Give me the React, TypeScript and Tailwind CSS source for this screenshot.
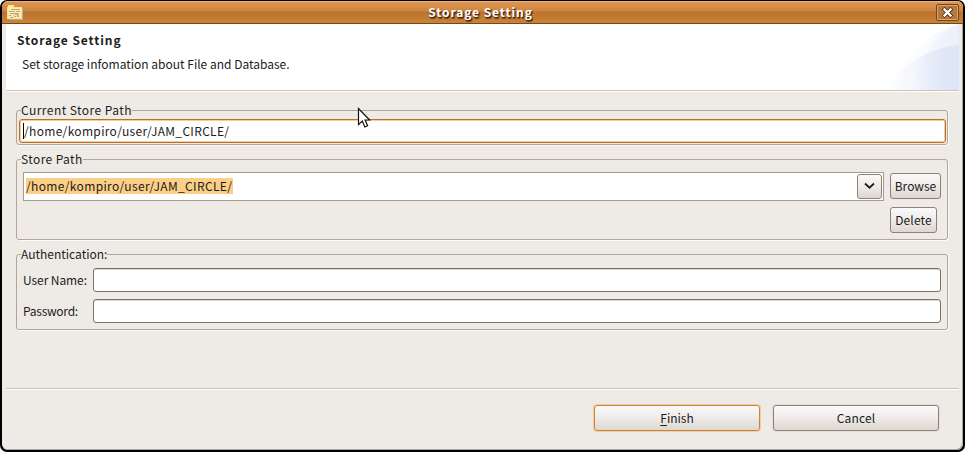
import type { ReactNode } from "react";

function FolderIcon() {
  return (
    <svg width="17" height="16" viewBox="0 0 17 16" shapeRendering="crispEdges">
      <path d="M2 3h14v12H2z" fill="#b9a99a" />
      <path d="M0 2h1V0h6v2h8v12H0z" fill="#fbdf9b" />
      <path d="M1 2h1V1h4v2h8v10H1z" fill="#fdeaae" />
      <path d="M4 4h9v1H4zM2 6h6v1H2zM9 6h4v1H9zM3 8h9v1H3zM2 10h2v1H2zM6 10h1v1H6zM8 9h3v1H8zM10 10h2v2h-2zM3 12h3v1H3zM7 11h2v1H7z" fill="#bda77b" />
    </svg>
  );
}

function TitleBar() {
  return (
    <div className="flex h-[22px] shrink-0 items-center border-t border-[#eeb47c] bg-[linear-gradient(#dc9650_0px,#cf843f_9px,#b9722e_10px,#c98337_20px)] pl-[5px] pr-[4px]">
      <FolderIcon />
      <div className="mb-[2px] flex-1 pl-[1px] text-center text-[12px] font-bold leading-[18px] tracking-[0.92px] text-white [text-shadow:1px_1px_1px_#3c2410,1px_2px_1px_#6b4015]">
        Storage Setting
      </div>
      <div className="flex h-[17px] w-[23px] items-center justify-center rounded-[2px] border border-[#76461b] bg-[#b8783b] shadow-[inset_0_0_0_1px_#dda36b]">
        <svg width="11" height="11" viewBox="0 0 11 11">
          <path d="M2.5 2.5l6 6M8.5 2.5l-6 6" stroke="#4b2b10" strokeWidth="3.9" strokeLinecap="square" />
          <path d="M2.5 2.5l6 6M8.5 2.5l-6 6" stroke="#fff" strokeWidth="2.4" strokeLinecap="square" />
        </svg>
      </div>
    </div>
  );
}

function BannerArt() {
  return (
    <svg width="75" height="66" viewBox="0 0 75 66" className="shrink-0">
      <defs>
        <linearGradient id="outer" gradientUnits="userSpaceOnUse" x1="4" x2="75" y1="0" y2="0">
          <stop offset="0" stopColor="#dfe7f7" stopOpacity="0" />
          <stop offset=".4" stopColor="#dfe7f7" stopOpacity=".2" />
          <stop offset="1" stopColor="#dfe7f7" />
        </linearGradient>
        <linearGradient id="inner" gradientUnits="userSpaceOnUse" x1="0" x2="75" y1="0" y2="0">
          <stop offset="0" stopColor="#dae3f6" stopOpacity="0" />
          <stop offset=".4" stopColor="#dae3f6" stopOpacity=".32" />
          <stop offset=".85" stopColor="#dae3f6" />
        </linearGradient>
      </defs>
      <path d="M4 66C16 38 39 10 75 0v66z" fill="url(#outer)" opacity=".4" />
      <path d="M28 66C34 38 49 12 75 0v66z" fill="url(#outer)" opacity=".4" />
      <path d="M1 66C18 40 43 24 75 21v45z" fill="url(#inner)" opacity=".8" />
    </svg>
  );
}

function Group({ title, legendClass, className, children }: { title: string; legendClass: string; className: string; children: ReactNode }) {
  return (
    <fieldset className={`rounded-[3px] border border-[#b3a698] shadow-[1px_1px_0_#fbf9f7] ${className}`}>
      <legend className={`ml-[4px] h-[19px] whitespace-nowrap leading-[18px] ${legendClass}`}>{title}</legend>
      {children}
    </fieldset>
  );
}

const button =
  "flex items-center justify-center rounded-[3px] border border-[#8d8175] bg-[linear-gradient(#fbfafa,#eeebe8_50%,#ded7d1)] whitespace-nowrap";
const entry =
  "h-[24px] flex-1 rounded-[3px] border border-[#7d7064] bg-white shadow-[inset_0_1px_0_#dcd7d2]";

export default function App() {
  return (
    <div className="relative h-[452px] w-[965px] overflow-hidden bg-white font-['Noto_Sans_CJK_JP','Noto_Sans',sans-serif] text-[12px] text-[#1c1c1c]">
      <div className="flex h-[452px] flex-col overflow-hidden rounded-[7px] bg-black pb-[2px] pl-[2px] pr-[2px] pt-px">
        <div className="flex flex-1 flex-col overflow-hidden rounded-[6px] bg-[#eeebe7] shadow-[inset_-1px_-1px_0_#afa49a]">
          <TitleBar />
          <div className="h-px shrink-0 bg-[#764718]" />
          <div className="ml-[4px] mr-[4px] flex h-[66px] shrink-0 justify-between bg-white">
            <div className="flex flex-col pl-[11px] pt-[7px]">
              <div className="h-[18px] whitespace-nowrap font-bold leading-[18px] tracking-[0.92px]">Storage Setting</div>
              <div className="mt-[6px] h-[18px] whitespace-nowrap pl-[5px] leading-[18px]">Set storage infomation about File and Database.</div>
            </div>
            <BannerArt />
          </div>
          <div className="ml-[4px] mr-[4px] h-[2px] shrink-0 border-b border-white bg-[#cdc0b5]" />

          <div className="flex flex-col pl-[14px] pr-[15px] pt-[9px]">
            <Group title="Current Store Path" legendClass="tracking-[0.45px]" className="h-[44px]">
              <div className="-mt-px ml-[2px] mr-px flex h-[24px] items-center rounded-[3px] border border-[#bf6f23] bg-white pl-[3px] shadow-[inset_0_0_0_1px_#f5cd94]">
                <span className="h-[16px] w-px bg-black" />
                <span className="whitespace-nowrap leading-[18px] tracking-[0.32px]">/home/kompiro/user/JAM_CIRCLE/</span>
              </div>
            </Group>

            <Group title="Store Path" legendClass="tracking-[0.4px]" className="mt-[5px] h-[90px]">
              <div className="flex items-start pl-[6px] pt-[3px]">
                <div className="flex h-[29px] w-[861px] items-center border border-[#a79b90] bg-white pl-[2px] pr-px">
                  <span className="mb-px h-[16px] whitespace-nowrap bg-[#fbcf86] pr-[1px] leading-[16px] tracking-[0.35px]">/home/kompiro/user/JAM_CIRCLE/</span>
                  <span className={`${button} ml-auto h-[25px] w-[25px]`}>
                    <svg width="11" height="8" viewBox="0 0 11 8" fill="none" className="mb-px mr-px">
                      <path d="M1 1.5l4.5 4.2L10 1.5" stroke="#1c1c1c" strokeWidth="1.8" />
                    </svg>
                  </span>
                </div>
                <div className="ml-[6px] mt-px flex flex-col gap-[8px]">
                  <button className={`${button} h-[26px] w-[51px]`}>Browse</button>
                  <button className={`${button} h-[26px] w-[47px] tracking-[0.15px]`}>Delete</button>
                </div>
              </div>
            </Group>

            <Group title="Authentication:" legendClass="" className="mt-[5px] h-[85px]">
              <div className="flex flex-col gap-[7px] pl-[6px] pr-[6px] pt-[4px]">
                <label className="flex items-center">
                  <span className="w-[70px] whitespace-nowrap leading-[18px] tracking-[-0.08px]">User Name:</span>
                  <span className={entry} />
                </label>
                <label className="flex items-center">
                  <span className="w-[70px] whitespace-nowrap leading-[18px] tracking-[-0.25px]">Password:</span>
                  <span className={entry} />
                </label>
              </div>
            </Group>
          </div>

          <div className="ml-[4px] mr-[4px] mt-[58px] h-[2px] shrink-0 border-b border-white bg-[#cdc0b5]" />
          <div className="flex justify-end gap-[13px] pr-[24px] pt-[15px]">
            <button className={`${button} h-[26px] w-[166px] !border-[#c58443] shadow-[0_0_0_1px_#f4cf9c]`}>
              <span className="underline underline-offset-2">F</span>inish
            </button>
            <button className={`${button} h-[26px] w-[166px] tracking-[0.15px] shadow-[0_0_0_1px_#e4dfda]`}>Cancel</button>
          </div>
        </div>
      </div>

      <svg className="absolute left-[357px] top-[107px]" width="15" height="22" viewBox="0 0 15 22">
        <path d="M1.5 1.5v16.2l3.8-3.6 2.5 5.9 2.8-1.2-2.5-5.8h4.5z" fill="#fff" stroke="#111" strokeWidth="1.2" />
      </svg>
    </div>
  );
}
